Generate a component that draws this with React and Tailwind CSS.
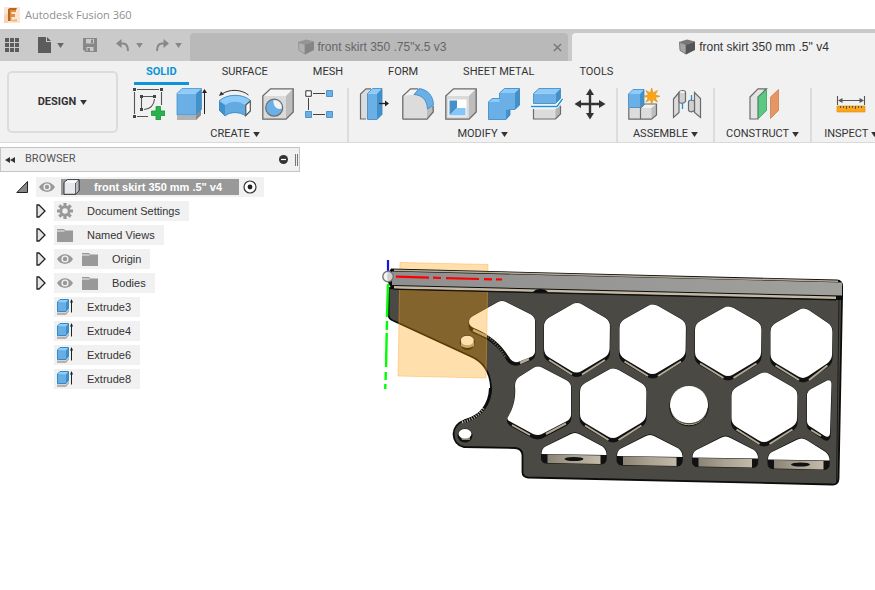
/* Small glyphs */

const Caret = ({ className = "" }) => (
    <svg viewBox="0 0 8 6" className={`w-[7px] h-[5px] shrink-0 ${className}`} fill="currentColor" aria-hidden="true">
        <path d="M0 0H8L4 6Z" />
    </svg>
);

const TabCube = ({ front, side, top }) => (
    <svg viewBox="0 0 16 16" className="w-4 h-4 shrink-0" aria-hidden="true">
        <path d="M0 3L8 .5L16 2.5L7 5.5Z" fill={top} />
        <path d="M0 3L7 5.5V15.5L1 11.5Z" fill={front} />
        <path d="M7 5.5L16 2.5V11L7 15.5Z" fill={side} />
        <path d="M.5 3.300L7 5.500V15L1 11.500Z" fill="none" stroke={side} strokeWidth=".6" />
    </svg>
);

const Eye = () => (
    <svg viewBox="0 0 16 12" className="w-4 h-3" aria-hidden="true">
        <path d="M0 6C4-.5 12-.5 16 6C12 12.500 4 12.500 0 6Z" fill="#999" />
        <circle cx="8" cy="6" r="3.600" fill="#f1f1f1" />
        <circle cx="8" cy="6" r="2.200" fill="#999" />
    </svg>
);

const Folder = () => (
    <svg viewBox="0 0 16 14" className="w-4 h-[14px]" fill="#999" aria-hidden="true">
        <path d="M0 1H7L8.500 2.500H16V14H0Z" />
        <path d="M0 3H7.500" stroke="#f1f1f1" strokeWidth="1" />
    </svg>
);

const Gear = () => (
    <svg viewBox="0 0 16 16" className="w-4 h-4" aria-hidden="true">
        <g stroke="#999" strokeWidth="3.200">
            <path d="M8 0V16M0 8H16M2.300 2.300L13.700 13.700M13.700 2.300L2.300 13.700" />
        </g>
        <circle cx="8" cy="8" r="5.500" fill="#999" />
        <circle cx="8" cy="8" r="2.700" fill="#f1f1f1" />
    </svg>
);

const ExtrudeSmall = () => (
    <svg viewBox="0 0 16 16" className="w-4 h-4" aria-hidden="true">
        <path d="M0 13.500H9L12 10.500V12.500L9 16H0Z" fill="#b3b3b3" />
        <path d="M.5 3L3 .5H11.500V9.500L9 12.500H.5Z" fill="#66aee4" stroke="#3787c2" />
        <path d="M1 3L3 1H11L9 3.500Z" fill="#8fcdfb" />
        <path d="M9 3.500L11.500 1V10L9 12.500Z" fill="#3f8fc9" />
        <path d="M14.500 2V13.500" stroke="#222" />
        <path d="M13 3.500L14.500 0L16 3.500Z" fill="#222" />
    </svg>
);

const Expand = () => (
    <svg viewBox="0 0 10 14" className="w-[10px] h-[14px]" aria-hidden="true">
        <path d="M1 1H3L9 7L3 13H1Z" fill="#e6e6ea" stroke="#222" strokeWidth="1.300" />
    </svg>
);

/* Toolbar icons, all on a 32px grid */

const EDGE = "#6b6b6b";

function Icon({ children }) {
    return (
        <svg viewBox="0 0 32 32" className="w-8 h-8 block" fill="none" aria-hidden="true">
            {children}
        </svg>
    );
}

const GrayBox = () => (
    <>
        <path d="M.8 8L8.500 .8H31.200V24L24 31.200H.8Z" fill="#dadada" />
        <path d="M.8 8L8.500 .8H31.200L24 8Z" fill="#f3f3f3" />
        <path d="M24 8L31.200 .8V24L24 31.200Z" fill="#bdbdbd" />
        <path d="M.8 8L8.500 .8H31.200V24L24 31.200H.8Z" stroke={EDGE} strokeWidth="1.300" />
    </>
);

const SketchIcon = () => (
    <Icon>
        <path d="M1.500 4V26M4 1.500H26M28.500 4V17M4 28.500H15M8.500 10V20M10 8.500H20M21.500 11C21 17 17 21 11 21.500" stroke="#555" strokeWidth="1.100" />
        <path d="M0 0h3v3H0zM27 0h3v3h-3zM0 27h3v3H0zM7 7h3v3H7zM20 7h3v3h-3zM7 20h3v3H7z" fill="#444" />
        <path d="M23 18.500h4.500V23H32v4.500H27.500V32H23V27.500H18.500V23H23z" fill="#2bb24c" stroke="#16963a" strokeWidth=".8" />
    </Icon>
);

const ExtrudeIcon = () => (
    <Icon>
        <path d="M1 27.500H20L25 22.500V27L20 32H1Z" fill="#b3b3b3" />
        <path d="M20 27.500L25 22.500V27L20 32Z" fill="#8a8a8a" />
        <path d="M1 5.500H20V27H1Z" fill="#6ab0e6" />
        <path d="M1 5.500L6 .5H25.500L20 5.500Z" fill="#8ccbfa" />
        <path d="M20 5.500L25.500 .5V21.500L20 27Z" fill="#4391cb" />
        <path d="M1 27V5.500L6 .5H25.500V21.500L20 27Z" stroke="#3b88c3" strokeWidth=".7" />
        <path d="M28.500 4V26" stroke="#222" />
        <path d="M26 5L28.500 1L31 5Z" fill="#222" />
    </Icon>
);

const RevolveIcon = () => (
    <Icon>
        <path d="M3 6C10 1 22 1 29.500 7" stroke="#333" />
        <path d="M0 8L2 3.500L5 6.500Z" fill="#333" />
        <path d="M0 13C8 5.500 24 5.500 31.500 12.500V23L26.500 28C21 23.500 11 23.500 6 28L0 22Z" fill="#63aae1" />
        <path d="M0 13C8 5.500 24 5.500 31.500 12.500L26 17C20 12.500 12 12.500 6 17Z" fill="#8ccbfa" />
        <path d="M0 13L6 17V28L0 22Z" fill="#4391cb" />
        <path d="M0 13C8 5.500 24 5.500 31.500 12.500M6 28C11 23.500 21 23.500 26.500 28M0 13V22L6 28" stroke="#3787c2" strokeWidth=".8" />
        <path d="M26.800 17L31.300 13V23L26.800 27.500Z" fill="#fff" stroke="#555" strokeWidth="1.200" />
    </Icon>
);

const HoleIcon = () => (
    <Icon>
        <GrayBox />
        <circle cx="12.200" cy="19.700" r="8.500" fill="#6ab0e6" stroke={EDGE} strokeWidth="1.200" />
        <path d="M11.500 12C11 19 15 22 20 20.500A8 8 0 0 0 11.500 12Z" fill="#f3f3f3" />
    </Icon>
);

const PatternIcon = () => (
    <Icon>
        <path d="M8 5.500H20M3.500 10V22M8 26.500H20" stroke="#444" />
        <path d="M.8 2.800h5.500v5.500H.8z" fill="#fff" stroke="#333" />
        <path d="M21.500 2.500h6v6h-6zM.5 23.500h6v6h-6zM21.500 23.500h6v6h-6z" fill="#6ab0e6" stroke="#3787c2" strokeWidth=".8" />
    </Icon>
);

const PressPullIcon = () => (
    <Icon>
        <path d="M1.500 31V6L7 .8H13L8 6V31Z" fill="#dcdcdc" />
        <path d="M7 31H1.500V6L7 .8H12" stroke={EDGE} strokeWidth="1.200" />
        <path d="M8.500 5.500H18V31.500H8.500Z" fill="#6ab0e6" />
        <path d="M8.500 5.500L13.500 .5H23L18 5.500Z" fill="#8ccbfa" />
        <path d="M18 5.500L23 .5V26.500L18 31.500Z" fill="#4391cb" />
        <path d="M8.500 31.500V5.500L13.500 .5H23V26.500L18 31.500Z" stroke="#3787c2" strokeWidth=".8" />
        <path d="M20 15.500H27" stroke="#222" strokeWidth="1.300" />
        <path d="M26 12.500L30 15.500L26 18.500Z" fill="#222" />
    </Icon>
);

const FilletIcon = () => (
    <Icon>
        <path d="M.8 31.200V8L8.500 .8H16C26 2 31 9 31.200 18V24L25 31.200Z" fill="#dcdcdc" />
        <path d="M.8 8L8.500 .8H17L12 6.500Z" fill="#f3f3f3" />
        <path d="M25 21L31.200 17V24L25 31.200Z" fill="#bdbdbd" />
        <path d="M.8 31.200V8L8.500 .8H16M31.200 18V24L25 31.200H.8" stroke={EDGE} strokeWidth="1.300" />
        <path d="M17 .6C26 1.500 31.500 8.500 31.500 17L25.500 21C25 12 20 7 12 6.500Z" fill="#6ab0e6" stroke="#3787c2" strokeWidth=".8" />
    </Icon>
);

const ShellIcon = () => (
    <Icon>
        <GrayBox />
        <path d="M3.500 11.500H21.500V28.500H3.500Z" fill="#fff" />
        <path d="M4.500 12.500H12V20L4.500 27.500Z" fill="#4391cb" />
        <path d="M4.500 27.500L12 20H20.500V27.500Z" fill="#84c6f8" />
    </Icon>
);

const CombineIcon = () => (
    <Icon>
        <path d="M.5 14L4 10.500H11.500V5L16.500 .5H31.500V17L27 21.500H22V27L18 31.500H.5Z" fill="#6ab0e6" />
        <path d="M11.500 5L16.500 .5H31.500L27 5ZM.5 14L4 10.500H11.500V14Z" fill="#8ccbfa" />
        <path d="M27 5L31.500 .5V17L27 21.500ZM18 22L22 21.500V27L18 31.500Z" fill="#4391cb" />
        <path d="M.5 14L4 10.500H11.500V5L16.500 .5H31.500V17L27 21.500H22V27L18 31.500H.5Z" stroke="#3787c2" strokeWidth=".8" />
    </Icon>
);

const SplitIcon = () => (
    <Icon>
        <path d="M2.500 21.500H24.500L29.500 16V26L24.500 31H2.500Z" fill="#dcdcdc" />
        <path d="M24.500 21.500L29.500 16V26L24.500 31Z" fill="#b5b5b5" />
        <path d="M2.500 21V31H24.500L29.500 26V18" stroke={EDGE} strokeWidth="1.200" />
        <path d="M2.500 5.500H24.500V15.500H2.500Z" fill="#6ab0e6" />
        <path d="M2.500 5.500L8 .5H29.500L24.500 5.500Z" fill="#8ccbfa" />
        <path d="M24.500 5.500L29.500 .5V10.500L24.500 15.500Z" fill="#4391cb" />
        <path d="M2.500 15.500V5.500L8 .5H29.500V10.500L24.500 15.500Z" stroke="#3787c2" strokeWidth=".8" />
        <path d="M0 18.500H26L31.500 11" stroke="#fff" strokeWidth="3" />
        <path d="M0 18.500H26L31.500 11" stroke="#1593dc" strokeWidth="1.300" />
    </Icon>
);

const MoveIcon = () => (
    <Icon>
        <path d="M16 5V27M5 16H27" stroke="#333" strokeWidth="2.400" />
        <path d="M16 .5L20 7H12ZM16 31.500L20 25H12ZM.5 16L7 12V20ZM31.500 16L25 12V20Z" fill="#333" />
    </Icon>
);

const ComponentIcon = () => (
    <Icon>
        <path d="M.8 20H12.500V31.200H.8ZM12.500 20L16.500 16H28.500V27L23.500 31.200H12.500Z" fill="#dcdcdc" />
        <path d="M12.500 20L16.500 16H28.500L23.500 20Z" fill="#f1f1f1" />
        <path d="M23.500 20L28.500 16V27L23.500 31.200Z" fill="#bdbdbd" />
        <path d="M.8 20V31.200H23.500L28.500 27V16H16.500L12.500 20V31.200" stroke={EDGE} strokeWidth="1.200" />
        <path d="M.5 6H12V19.500H.5Z" fill="#6ab0e6" />
        <path d="M.5 6L5 1.500H16L12 6Z" fill="#8ccbfa" />
        <path d="M12 6L16 1.500V15.500L12 19.500Z" fill="#4391cb" />
        <path d="M.5 19.500V6L5 1.500H16V15.500L12 19.500Z" stroke="#3787c2" strokeWidth=".8" />
        <path d="M23.700 0L25 5L29.500 2.500L27 7L32 8.300L27 9.600L29.500 14L25 11.600L23.700 16.500L22.400 11.600L18 14L20.400 9.600L15.500 8.300L20.400 7L18 2.500L22.400 5Z" fill="#f9a61c" stroke="#e08a00" strokeWidth=".6" />
    </Icon>
);

const JointIcon = () => (
    <Icon>
        <path d="M2.500 11L8 4.500V24.500L2.500 29.500Z" fill="#dcdcdc" stroke={EDGE} strokeWidth="1.200" />
        <path d="M8 4.500C9 2 14 2 14.500 4V13.500C13 16 9 15.500 8 14Z" fill="#d0d0d0" stroke={EDGE} strokeWidth="1.200" />
        <ellipse cx="11.300" cy="4" rx="2.500" ry="1" fill="#f5f5f5" />
        <path d="M23.500 4.500L29.500 10.500V29.500L23.500 24.500Z" fill="#dcdcdc" stroke={EDGE} strokeWidth="1.200" />
        <path d="M17.500 13.500C18 11.500 22.500 11.500 23.500 13.500V22.500C21 24.500 18 24 17.500 22Z" fill="#d0d0d0" stroke={EDGE} strokeWidth="1.200" />
        <path d="M11.500 15V21M20.500 7V13" stroke="#1593dc" strokeWidth="1.300" />
    </Icon>
);

const PlaneIcon = () => (
    <Icon>
        <path d="M3 9L11 .8H19.500L11 9V31H3Z" fill="#e4e4e4" stroke={EDGE} strokeWidth="1.200" />
        <path d="M11.500 9L19.500 1.500V22.500L11.500 30.500Z" fill="#5cc983" stroke="#3f9e5c" strokeWidth=".8" />
        <path d="M23.500 9L31.500 1.500V22.500L23.500 30.500Z" fill="#e69564" stroke="#cf7d4b" strokeWidth=".8" />
    </Icon>
);

const MeasureIcon = () => (
    <Icon>
        <path d="M2.500 8V17M29.500 8V17M5 12.500H27" stroke="#555" strokeWidth="1.100" />
        <path d="M3 12.500L7.500 10V15ZM29 12.500L24.500 10V15Z" fill="#555" />
        <path d="M2 18H30V24H2Z" fill="#f9a61c" stroke="#e08a00" strokeWidth=".6" />
        <path d="M5.500 18V20M8.500 18V20M11.500 18V21M14.500 18V20M17.500 18V20M20.500 18V21M23.500 18V20M26.500 18V20" stroke="#555" />
    </Icon>
);

const GROUPS = [
    { label: "CREATE", box: "pl-[11px] pr-[10px]", icons: [["Create Sketch", SketchIcon], ["Extrude", ExtrudeIcon], ["Revolve", RevolveIcon], ["Hole", HoleIcon], ["Pattern", PatternIcon]] },
    { label: "MODIFY", box: "px-[10px]", icons: [["Press Pull", PressPullIcon], ["Fillet", FilletIcon], ["Shell", ShellIcon], ["Combine", CombineIcon], ["Split Body", SplitIcon], ["Move", MoveIcon]] },
    { label: "ASSEMBLE", box: "px-[10px]", icons: [["New Component", ComponentIcon], ["Joint", JointIcon]] },
    { label: "CONSTRUCT", box: "px-[11px]", icons: [["Offset Plane", PlaneIcon]] },
    { label: "INSPECT", box: "pl-3", icons: [["Measure", MeasureIcon]] },
];

const WORK_TABS = ["SOLID", "SURFACE", "MESH", "FORM", "SHEET METAL", "TOOLS"];

function TitleBar() {
    return (
        <div className="h-[29px] bg-white flex items-center pl-1 gap-[5px]">
            <svg viewBox="0 0 16 16" className="w-4 h-4" aria-hidden="true">
                <path d="M0 0H16V16H0Z" fill="#fbe6d5" />
                <path d="M0 8L4 6V16H0Z" fill="#f7d3b5" />
                <path d="M4 2H12V5H7.500V7H11V10H7.500V14H4Z" fill="#e08f3f" />
                <path d="M4 2L6 1H13L12 3H6V14H4Z" fill="#b8651d" />
                <path d="M8 13L13 12V14.500H8Z" fill="#f5b67d" />
            </svg>
            <span className="text-[11px] leading-4 text-[#8f8f8f] font-['Open_Sans',sans-serif]">Autodesk Fusion 360</span>
        </div>
    );
}

function DocTab({ title, active }) {
    return (
        <div className={`w-[378px] h-7 shrink-0 rounded-t flex items-center ${active ? "bg-[#f1f1f1] text-[#333]" : "bg-[#b9b9b9] text-[#666]"}`}>
            <button className="flex-1 pl-2 h-full flex items-center justify-center gap-1 text-[12px]">
                {active ? <TabCube front="#a5a5a5" side="#555" top="#777" /> : <TabCube front="#b0b0b0" side="#858585" top="#959595" />}
                {title}
            </button>
            <button aria-label="Close tab" className="w-[22px] h-full flex items-center justify-center">
                <svg viewBox="0 0 10 10" className="w-[9px] h-[9px]" stroke="#777" strokeWidth="1.600" aria-hidden="true">
                    <path d="M1 1L9 9M9 1L1 9" />
                </svg>
            </button>
        </div>
    );
}

function TabBar() {
    return (
        <div className="h-8 bg-[#cacaca] flex items-end overflow-hidden">
            <div className="w-[190px] h-full shrink-0 flex items-center text-[#666] pl-[5px]">
                <button aria-label="Data panel">
                    <svg viewBox="0 0 14 14" className="w-[14px] h-[14px]" fill="#5c5c5c" aria-hidden="true">
                        <path d="M0 0h4v4H0zM5 0h4v4H5zM10 0h4v4h-4zM0 5h4v4H0zM5 5h4v4H5zM10 5h4v4h-4zM0 10h4v4H0zM5 10h4v4H5zM10 10h4v4h-4z" />
                    </svg>
                </button>
                <button aria-label="File" className="ml-[19px] flex items-center gap-[6px]">
                    <svg viewBox="0 0 13 16" className="w-[13px] h-4" fill="#5c5c5c" aria-hidden="true">
                        <path d="M0 0H8V5H13V16H0ZM9 0L13 4H9Z" />
                    </svg>
                    <Caret />
                </button>
                <button aria-label="Save" className="ml-[19px] text-[#888]">
                    <svg viewBox="0 0 14 14" className="w-[14px] h-[14px]" aria-hidden="true">
                        <path d="M0 0H14V14H2.500L0 11.500Z" fill="#888" />
                        <path d="M3 1H11V5.500H3ZM3.500 9H10.500V13H3.500Z" fill="#cacaca" />
                        <path d="M8 1.500H10V5H8ZM4.500 10H7V13H4.500Z" fill="#888" />
                    </svg>
                </button>
                <button aria-label="Undo" className="ml-[19px] flex items-center gap-[7px] text-[#888]">
                    <svg viewBox="0 0 13 12" className="w-[13px] h-3" aria-hidden="true">
                        <path d="M3 4.500H7C10 4.500 12 7 12 12" fill="none" stroke="#888" strokeWidth="2" />
                        <path d="M0 4.500L5.500 0V9Z" fill="#888" />
                    </svg>
                    <Caret />
                </button>
                <button aria-label="Redo" className="ml-[13px] flex items-center gap-[6px] text-[#888]">
                    <svg viewBox="0 0 13 12" className="w-[13px] h-3" aria-hidden="true">
                        <path d="M10 4.500H6C3 4.500 1 7 1 12" fill="none" stroke="#888" strokeWidth="2" />
                        <path d="M13 4.500L7.500 0V9Z" fill="#888" />
                    </svg>
                    <Caret />
                </button>
            </div>
            <div className="flex gap-1">
                <DocTab title={'front skirt 350 .75"x.5 v3'} />
                <DocTab title={'front skirt 350 mm .5" v4'} active />
            </div>
        </div>
    );
}

function Ribbon() {
    return (
        <div className="bg-[#f1f1f1] border-b border-[#d9d9d9] flex overflow-hidden font-[Roboto,sans-serif] text-[11px] text-[#333]">
            <button className="w-[111px] h-[62px] mt-[10px] ml-[7px] shrink-0 rounded-[5px] border-2 border-[#dcdcdc] flex items-center justify-center gap-1 font-bold">
                DESIGN <Caret />
            </button>
            <div className="ml-1 shrink-0">
                <nav className="flex gap-[21px] pl-3 h-6">
                    {WORK_TABS.map((tab) => (
                        <button
                            key={tab}
                            className={`px-3 pt-px border-b-3 leading-5 ${tab === "SOLID" ? "border-[#0d94d8] text-[#0d94d8] font-bold" : "border-transparent"}`}
                        >
                            {tab}
                        </button>
                    ))}
                </nav>
                <div className="flex pt-[3px] divide-x-2 divide-[#dcdcdc]">
                    {GROUPS.map(({ label, box, icons }) => (
                        <div key={label} className={`flex flex-col items-center gap-[6px] ${box}`}>
                            <div className="flex gap-[11px]">
                                {icons.map(([name, Glyph]) => (
                                    <button key={name} aria-label={name}>
                                        <Glyph />
                                    </button>
                                ))}
                            </div>
                            <button className="flex items-center gap-[3px] leading-4">
                                {label} <Caret />
                            </button>
                        </div>
                    ))}
                </div>
            </div>
        </div>
    );
}

const NODES = [
    { name: "Document Settings", Glyph: Gear, expandable: true },
    { name: "Named Views", Glyph: Folder, expandable: true },
    { name: "Origin", Glyph: Folder, expandable: true, eye: true },
    { name: "Bodies", Glyph: Folder, expandable: true, eye: true },
    { name: "Extrude3", Glyph: ExtrudeSmall },
    { name: "Extrude4", Glyph: ExtrudeSmall },
    { name: "Extrude6", Glyph: ExtrudeSmall },
    { name: "Extrude8", Glyph: ExtrudeSmall },
];

function Browser() {
    return (
        <aside className="w-[300px] shrink-0 pt-1 text-[11px] text-[#333]">
            <div className="h-[25px] bg-[#f1f1f1] border border-[#c4c4c4] flex items-center pl-1 pr-px">
                <svg viewBox="0 0 10 6" className="w-[10px] h-[6px]" fill="#333" aria-hidden="true">
                    <path d="M5 0V6L0 3ZM10 0V6L5 3Z" />
                </svg>
                <span className="ml-[10px] text-[#555] font-[Roboto,sans-serif]">BROWSER</span>
                <button aria-label="Collapse all" className="ml-auto">
                    <svg viewBox="0 0 9 9" className="w-[9px] h-[9px]" aria-hidden="true">
                        <circle cx="4.500" cy="4.500" r="4.500" fill="#333" />
                        <path d="M2 4.500H7" stroke="#fff" strokeWidth="1.200" />
                    </svg>
                </button>
                <div className="ml-[7px] w-[3px] h-3 border-x border-[#777]" />
            </div>

            <div className="mt-[5px] flex items-center h-5 pl-4">
                <svg viewBox="0 0 12 12" className="w-3 h-3 mr-2" aria-hidden="true">
                    <path d="M11.500 .5V11.500H.8Z" fill="#888" stroke="#222" />
                </svg>
                <div className="h-5 bg-[#f1f1f1] flex items-center pl-[3px] pr-[7px]">
                    <Eye />
                    <div className="ml-[6px] w-[178px] h-4 bg-[#999] flex items-center pl-[2px] text-white font-bold whitespace-nowrap">
                        <svg viewBox="0 0 17 16" className="w-[17px] h-4 mr-[14px]" aria-hidden="true">
                            <path d="M1 3.500L4.500 .7H16V12L12.500 15.300H1Z" fill="#e7e8ee" stroke="#333" />
                            <path d="M12.500 4L16 .7V12L12.500 15.300Z" fill="#b9bac2" stroke="#333" strokeWidth=".7" />
                            <path d="M1.500 3.500L4.700 1.200H15L12.500 3.700Z" fill="#fff" />
                        </svg>
                        {'front skirt 350 mm .5" v4'}
                    </div>
                    <svg viewBox="0 0 14 14" className="w-[14px] h-[14px] ml-1" aria-hidden="true">
                        <circle cx="7" cy="7" r="6" fill="#fff" stroke="#333" strokeWidth="1.200" />
                        <circle cx="7" cy="7" r="2.400" fill="#222" />
                    </svg>
                </div>
            </div>

            <ul className="mt-1 flex flex-col gap-1">
                {NODES.map(({ name, Glyph, expandable, eye }) => (
                    <li key={name} className="flex items-center h-5 pl-9">
                        <div className="w-[18px] shrink-0">{expandable && <Expand />}</div>
                        <div className="h-5 bg-[#f1f1f1] flex items-center pl-[3px] pr-[9px]">
                            {eye && (
                                <span className="mr-[9px]">
                                    <Eye />
                                </span>
                            )}
                            <Glyph />
                            <span className="ml-[14px]">{name}</span>
                        </div>
                    </li>
                ))}
            </ul>
        </aside>
    );
}

/* 3D model */

// closed path through the points with every corner rounded off
function rounded(points, r) {
    const n = points.length;
    let d = "";
    points.forEach(([x, y], i) => {
        const [px, py] = points[(i + n - 1) % n];
        const [nx, ny] = points[(i + 1) % n];
        const a = r / Math.hypot(px - x, py - y);
        const b = r / Math.hypot(nx - x, ny - y);
        d += `${i ? "L" : "M"}${x + (px - x) * a} ${y + (py - y) * a}Q${x} ${y} ${x + (nx - x) * b} ${y + (ny - y) * b}`;
    });
    return d + "Z";
}

function HexHole({ cx, top, left, right }) {
    const shape = (drop) => [
        [cx, top],
        [right, top + 19],
        [right - 0.5, top + 55 + drop],
        [cx - 0.5, top + 74.5 + drop],
        [left, top + 55 + drop],
        [left, top + 19],
    ];
    return (
        <g>
            <path d={rounded(shape(2), 6)} fill="#111" stroke="#111" strokeWidth="1" />
            <path
                d={`M${left + 5} ${top + 58.5}L${cx - 5} ${top + 73}M${cx + 5} ${top + 73}L${right - 5} ${top + 58.5}`}
                stroke="#b3aa96"
                strokeWidth="2"
            />
            <path d={rounded(shape(-2), 6)} fill="#fff" />
        </g>
    );
}

function Slot({ cx, top, left, right, bore }) {
    const body = [
        [cx, top],
        [right, top + 17],
        [right - 0.5, top + 32.5],
        [left, top + 31.5],
        [left, top + 17],
    ];
    return (
        <g>
            <path d={rounded(body, 5)} fill="#111" stroke="#111" strokeWidth="1" />
            <path d={`M${left + 6} ${top + 23}L${right - 6} ${top + 24}V${top + 32.5}L${left + 6} ${top + 31.5}Z`} fill="url(#wall)" />
            {bore && <ellipse cx={cx - 1} cy={top + 27.5} rx="9.500" ry="2" fill="#111" />}
            <path
                d={`M${cx - 5} ${top + 3}Q${cx} ${top} ${cx + 5} ${top + 3}L${right - 4} ${top + 15}Q${right} ${top + 18} ${right} ${top + 23.5}L${left} ${top + 22.5}Q${left} ${top + 17} ${left + 4} ${top + 15}Z`}
                fill="#fff"
            />
        </g>
    );
}

function Model() {
    return (
        <svg viewBox="300 143 575 447" className="block w-full" fill="none" role="img" aria-label="Model view">
            <defs>
                <linearGradient id="face" x1="0" y1="0" x2="1" y2="0">
                    <stop offset="0" stopColor="#8f8f8f" />
                    <stop offset="1" stopColor="#a0a19c" />
                </linearGradient>
                <linearGradient id="wall" x1="0" y1="0" x2="1" y2="0">
                    <stop offset="0" stopColor="#8b8474" />
                    <stop offset=".5" stopColor="#aaa292" />
                    <stop offset="1" stopColor="#c3baa8" />
                </linearGradient>
            </defs>

            {/* plate */}
            <path
                d="M388.500 288L842 299L838.500 479Q838 485 832 484.500L528 477.500Q522.500 477 522.500 472V455Q522 448.500 515 448L464 447Q454 445 453.500 434Q454 424 465 420C483 415 491 402 491 387C490 371 482 361 470 356L394 321Q388.500 319 388.500 315Z"
                fill="#4b4943"
                stroke="#0c0c0c"
                strokeWidth="1.800"
            />
            <path d="M464 421.500C481 417 490 404 490.500 388" stroke="#0c0c0c" strokeWidth="3" />
            <path d="M462 422C472 420 480 414.500 484 407.500" stroke="#c9c0ad" strokeWidth="2.500" strokeDasharray="1 1.500" />
            <path d="M839 300L836.500 482" stroke="#1b1b19" strokeWidth="1" />

            {/* first row, the left one is cut by the arc */}
            <path
                d="M498 302Q502 300 506 302L530 314Q535 317 535 321V354Q535 358 531 360L518 365Q510 366 506 359C499 347 490 339 474 333Q469 331 469 326V322Q469 318 473 316Z"
                fill="#111"
                stroke="#111"
            />
            <path
                d="M498 302Q502 300 506 302L530 314Q535 317 535 321V351Q535 355 531 357L518 362Q512 363 509 357C500 343 490 335 475 328.500Q469 326 469 322Q469 318 473 316Z"
                fill="#fff"
            />
            <path d="M473 330L487 336.500M520 363L529 359" stroke="#b3aa96" strokeWidth="2.500" />
            <path d="M488 337C496 343 501 350 506 358" stroke="#77705f" strokeWidth="2" strokeDasharray="1 1.500" />
            <HexHole cx={577} top={301.5} left={544} right={610} />
            <HexHole cx={653} top={303} left={619.5} right={686} />
            <HexHole cx={728.5} top={305} left={695} right={761.5} />
            <HexHole cx={804} top={307} left={770.5} right={832.5} />

            {/* second row */}
            <path
                d="M534 367.500Q538 365.500 542 367.500L566 380Q571 383 571 387V418Q570.500 423 567 425L542 438Q538 440 533 438L511 426Q506 423 508 418C514 407 516 397 515 386Q515 380 519 377Z"
                fill="#111"
                stroke="#111"
            />
            <path d="M512 425L530 435M546 434L566 423.500" stroke="#b3aa96" strokeWidth="2" />
            <path
                d="M534 367.500Q538 365.500 542 367.500L566 380Q571 383 571 387V415Q570.500 419 567 421L542 434Q538 436 533 434L511 422Q506 420 508 417C514 407 516 397 515 386Q515 380 519 377Z"
                fill="#fff"
            />
            <HexHole cx={613.5} top={367} left={580} right={646.5} />
            <HexHole cx={764.5} top={371} left={731.5} right={797.5} />
            <circle cx="689" cy="406.500" r="19.300" fill="#b3aa96" stroke="#111" />
            <path d="M670 405A19 19 0 1 1 708 405C707 429 671 429 670 405Z" fill="#fff" />
            <path d="M670 408C673 429 705 429 708 408" stroke="#222" strokeWidth=".8" />
            <path d="M827 380.500Q831.500 379 831.500 384L830 436Q829.500 442 824 439.500L811 431Q807 429 807 424V394Q807.500 391 811 389Z" fill="#111" stroke="#111" />
            <path d="M811 430L821 436" stroke="#b3aa96" strokeWidth="2" />
            <path d="M827 380.500Q831.500 379 831.500 384L830 433Q829.500 439 824 435.500L811 427Q807 425 807 421V394Q807.500 391 811 389Z" fill="#fff" />

            {/* bottom slots */}
            <Slot cx={575} top={431.5} left={541.5} right={606.5} bore />
            <Slot cx={650} top={433.5} left={617} right={682.5} />
            <Slot cx={725.5} top={435} left={692.5} right={758} />
            <Slot cx={801.5} top={437} left={768} right={829.5} bore />

            {/* screw holes */}
            <ellipse cx="467.300" cy="342.500" rx="7.500" ry="7.500" fill="#111" />
            <path d="M461 342H474V346Q467 350 461 346Z" fill="#b3aa96" />
            <ellipse cx="467.300" cy="340.500" rx="6.500" ry="4.800" fill="#fff" />
            <ellipse cx="465" cy="435.500" rx="7.500" ry="7" fill="#111" />
            <path d="M461 437L470 436.500V440H462Z" fill="#8b8474" />
            <ellipse cx="465" cy="433.800" rx="6.500" ry="4.800" fill="#fff" />

            {/* origin plane, passes behind the flange */}
            <path d="M400 262.500L488 264.500L486 378L398 376Z" fill="#ff9f00" fillOpacity=".32" stroke="#ffa530" strokeOpacity=".4" />

            {/* flange */}
            <path d="M391 268.500L837 279.500Q843 280 843 286V299.500L392 288.500Q387 284 387 275Z" fill="#0c0c0c" />
            <path d="M394 269.500L838 280.500V282L394 271Z" fill="#b5ac98" />
            <path d="M392 271.500L842 282.500V295.500L392 285Z" fill="url(#face)" />
            <path d="M394 286L836 296.500V299L394 288.500Z" fill="#c3b9a4" />
            <path d="M533 292C536 288 545 288 548 292.300Z" fill="#0c0c0c" />
            <path d="M394 289.300L836 300" stroke="#0c0c0c" strokeWidth="1" />

            {/* axes */}
            <path d="M396 276.700L429 277.600M433 277.700L441 278M446 278.100L479 279M484 279.100L492 279.300M496 279.400L502 279.500" stroke="#f00" strokeWidth="2.200" />
            <path d="M388 260V273" stroke="#1414e6" strokeWidth="2.200" />
            <path d="M388 284L387 317M387 321L386.800 330M386.700 333L386 367M385.800 372L385.600 380M385.400 384L385.200 389" stroke="#0f0" strokeWidth="2.400" />
            <circle cx="388" cy="276.500" r="5.200" fill="#f4f4f4" fillOpacity=".85" stroke="#777" strokeWidth="1.400" />
        </svg>
    );
}

export default function App() {
    return (
        <div className="min-h-screen bg-white flex flex-col font-['Liberation_Sans',Arial,sans-serif]">
            <header>
                <TitleBar />
                <TabBar />
                <Ribbon />
            </header>
            <main className="flex-1 flex">
                <Browser />
                <div className="flex-1 min-w-0">
                    <Model />
                </div>
            </main>
        </div>
    );
}
